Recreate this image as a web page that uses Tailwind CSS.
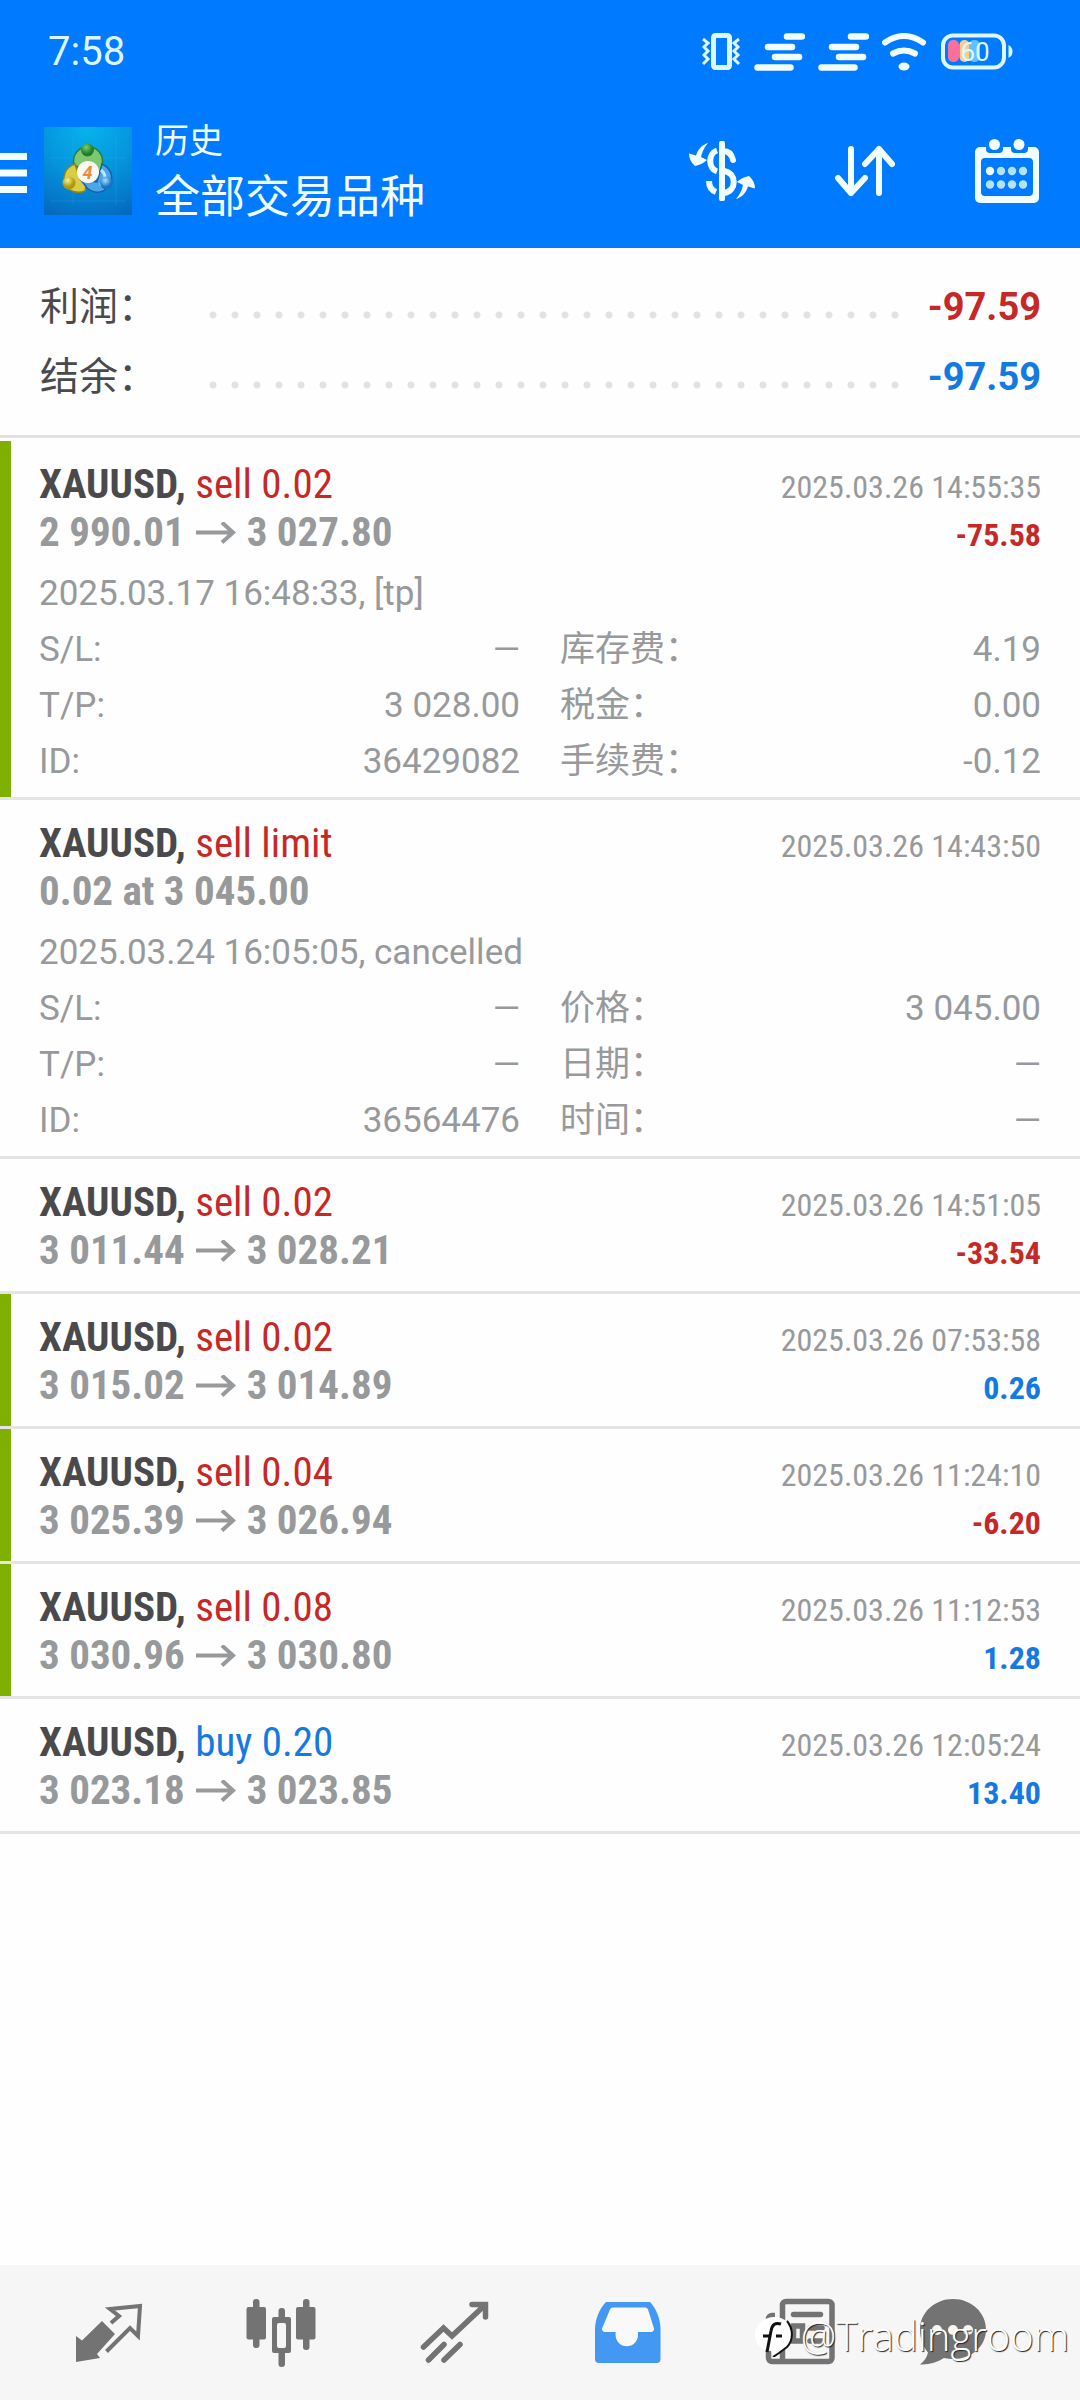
<!DOCTYPE html>
<html lang="zh-CN">
<head>
<meta charset="utf-8">
<meta name="viewport" content="width=device-width, initial-scale=1">
<title>历史</title>
<script src="https://cdn.jsdelivr.net/npm/@tailwindcss/browser@4"></script>
</head>
<body class="relative flex min-h-screen flex-col bg-[#fefefe] font-['Roboto','Noto_Sans_CJK_SC',sans-serif] text-[#97999b]">

<header class="border-b border-[#1f74c8] bg-[#007aff] text-[#f2fdff]">
  <!-- Status bar -->
  <div class="flex h-[104px] items-center justify-between pr-[67px] pl-12">
    <span class="text-[40px] leading-none text-[#dcf7ff]">7:58</span>
    <div class="flex items-center gap-[13px] text-[#dcf7ff]">
      <svg class="h-[38px] w-10" viewBox="0 0 40 38" fill="none" stroke="currentColor" aria-label="振动"><rect x="12.500" y="2.500" width="16" height="32" rx="2" stroke-width="5"/><path d="M2 6l5 4-4 4 4 4-4 4 4 4-5 5M38 6l-5 4 4 4-4 4 4 4-4 4 5 5" stroke-width="3"/></svg>
      <svg class="h-[38px] w-[51px]" viewBox="0 0 51 38" stroke="#f2fdff" stroke-width="6.500" stroke-linecap="round" aria-label="信号"><path d="M33 3.500h15M14 14h24M21 24h24M3.500 34.500h33"/></svg>
      <svg class="h-[38px] w-[51px]" viewBox="0 0 51 38" stroke="#f2fdff" stroke-width="6.500" stroke-linecap="round" aria-label="信号"><path d="M33 3.500h15M14 14h24M21 24h24M3.500 34.500h33"/></svg>
      <svg class="h-[38px] w-[46px]" viewBox="0 0 46 38" fill="none" stroke="#f2fdff" stroke-width="6" stroke-linecap="round" aria-label="无线网络"><path d="M3 9.500Q22-3.500 41 9.500M11 20.500q11-6 22 0"/><ellipse cx="22" cy="33.500" rx="5.500" ry="4" fill="#f2fdff" stroke="none"/></svg>
      <svg class="h-[38px] w-[72px]" viewBox="0 0 72 38" aria-label="电量">
        <rect x="2" y="2.500" width="61" height="32" rx="10" fill="none" stroke="currentColor" stroke-width="4"/>
        <rect x="7" y="7" width="11" height="22" rx="5" fill="#fb6f9d"/><rect x="18.500" y="7" width="10" height="22" rx="5" fill="#f7cf8d"/><rect x="28" y="7" width="11" height="22" rx="5" fill="#62c2ff"/>
        <path d="M67.500 12q4 2 4 6.500t-4 6.500z" fill="currentColor"/>
        <text x="34" y="28" text-anchor="middle" font-size="26" fill="currentColor">60</text>
      </svg>
    </div>
  </div>
  <!-- Title bar -->
  <div class="flex h-[143px] items-center pr-[41px] pb-[9px]">
    <button type="button" aria-label="菜单" class="mt-1"><svg class="h-10 w-[27px]" viewBox="0 0 27 40" fill="#f2fdff"><path d="M0 0h27v7H0zM0 16.500h27v7H0zM0 33h27v7H0z"/></svg></button>
    <svg class="ml-[17px] size-[88px] shrink-0" viewBox="0 0 88 88" aria-hidden="true">
      <defs>
        <radialGradient id="sky" cx=".5" cy="0" r="1.100"><stop offset="0" stop-color="#07b3ec"/><stop offset=".5" stop-color="#0594dc"/><stop offset="1" stop-color="#0468bd"/></radialGradient>
        <radialGradient id="gr" cx=".4" cy=".3"><stop offset="0" stop-color="#7fcf6c"/><stop offset="1" stop-color="#1f7d2e"/></radialGradient>
        <radialGradient id="ye" cx=".4" cy=".3"><stop offset="0" stop-color="#fbf08a"/><stop offset="1" stop-color="#a99a10"/></radialGradient>
        <radialGradient id="bl" cx=".4" cy=".3"><stop offset="0" stop-color="#a5e0ff"/><stop offset="1" stop-color="#1673c4"/></radialGradient>
      </defs>
      <rect width="88" height="88" fill="url(#sky)"/>
      <path d="M29 10v68M72 10v68M6 31h76M6 74h76" stroke="#4bb8ee" stroke-opacity=".2"/>
      <path d="M30 38a14.500 14.500 0 1 1 28 0l-3 12-9-9-8 1z" fill="#7cc770" stroke="#2b7d3a" stroke-width="1.500"/>
      <path d="M31 37c-10 3-12 12-11 19 4 9 14 11 21 8l2-10-8-5z" fill="#d9cd45" stroke="#8b8420" stroke-width="1.500"/>
      <path d="M58 37c8 4 11 11 9 19-5 10-16 12-24 5l-6-8 16 2z" fill="#4ba5e6" stroke="#155fa8" stroke-width="1.500"/>
      <path d="M57 43c6 5 5 12-1 15" fill="none" stroke="#bfe6fb" stroke-width="3"/>
      <circle cx="43.500" cy="23" r="6.500" fill="url(#gr)"/><circle cx="25" cy="56" r="6.500" fill="url(#ye)"/><circle cx="62.500" cy="56" r="6.500" fill="url(#bl)"/>
      <circle cx="44" cy="45" r="11" fill="#fdf9f4"/>
      <text x="43.500" y="51.500" text-anchor="middle" font-size="18" font-weight="700" font-style="italic" fill="#f08a35">4</text>
    </svg>
    <div class="ml-[23px] flex-1">
      <h1 class="text-[34px] leading-[54px]">历史</h1>
      <p class="text-[45px] leading-[60px]">全部交易品种</p>
    </div>
    <div class="flex items-center gap-20">
      <button type="button" aria-label="资金"><svg class="h-[60px] w-[66px]" viewBox="0 0 66 60" fill="none" stroke="currentColor" stroke-width="6"><path d="M33 2.500v55" stroke-linecap="round"/><path d="M28 9.500c-9 3-9 18 0 21M27 51c-5-2-7-6-7-11"/><path d="M34 10c6 0 9 4 10 9M35 30c13 2 13 20 0 22" stroke-linecap="round"/><g fill="currentColor" stroke="none"><path d="M19 2C13 4 9 8 7 14.500L0 12.500c0 5 2 9 6 12.500 5-1 9-3 12-6l-6-3c1-5 3-9 7-14z"/><path d="M47 58c6-2 10-6 12-12.500l7 2c0-5-2-9-6-12.500-5 1-9 3-12 6l6 3c-1 5-3 9-7 14z"/></g></svg></button>
      <button type="button" aria-label="排序"><svg class="h-[52px] w-[60px]" viewBox="0 0 60 52" fill="none" stroke="currentColor" stroke-width="6" stroke-linecap="round" stroke-linejoin="round"><path d="M16 4v44M3 33l13 15 14-15M44 48V4M30 19L44 4l13 15"/></svg></button>
      <button type="button" aria-label="日期"><svg class="size-16" viewBox="0 0 64 64" fill="currentColor"><path fill-rule="evenodd" d="M5 8h54a5 5 0 0 1 5 5v46a5 5 0 0 1-5 5H5a5 5 0 0 1-5-5V13a5 5 0 0 1 5-5zM10 19a4 4 0 0 0-4 4v30a4 4 0 0 0 4 4h44a4 4 0 0 0 4-4V23a4 4 0 0 0-4-4z"/><g fill="#007aff"><path d="M11 7h17v3a4 4 0 0 1-4 4h-9a4 4 0 0 1-4-4zM36 7h17v3a4 4 0 0 1-4 4h-9a4 4 0 0 1-4-4z"/></g><circle cx="19.500" cy="5.500" r="5.500"/><circle cx="44" cy="5.500" r="5.500"/><circle cx="15" cy="32" r="4.200"/><g fill="#b5e2ff"><circle cx="26" cy="32" r="4.200"/><circle cx="37" cy="32" r="4.200"/><circle cx="48" cy="32" r="4.200"/><circle cx="15" cy="45.500" r="4.200"/><circle cx="26" cy="45.500" r="4.200"/><circle cx="37" cy="45.500" r="4.200"/><circle cx="48" cy="45.500" r="4.200"/></g></svg></button>
    </div>
  </div>
</header>

<main class="flex-1">
  <!-- Totals -->
  <dl class="mb-[3px] border-b-3 border-[#e2e2e2] pt-6 pr-[39px] pb-[23px] pl-10 text-[39px] leading-[70px]">
    <div class="flex items-center">
      <dt class="w-[162px] text-[#4a4a4c]">利润：</dt>
      <dd class="mt-4 h-[22px] flex-1 bg-[radial-gradient(circle,#e2e2e2_3px,transparent_4px)] bg-[length:22px_22px]" aria-hidden="true"></dd>
      <dd class="w-[134px] text-right font-bold text-[38px] text-[#c62828]">-97.59</dd>
    </div>
    <div class="flex items-center">
      <dt class="w-[162px] text-[#4a4a4c]">结余：</dt>
      <dd class="mt-4 h-[22px] flex-1 bg-[radial-gradient(circle,#e2e2e2_3px,transparent_4px)] bg-[length:22px_22px]" aria-hidden="true"></dd>
      <dd class="w-[134px] text-right font-bold text-[38px] text-[#1479e0]">-97.59</dd>
    </div>
  </dl>
  <ul id="deals"></ul>
</main>

<nav class="grid h-[135px] grid-cols-[173fr_173fr_173fr_173fr_173fr_133fr] items-center justify-items-center bg-[#f6f6f6] pr-[61px] pl-[21px] text-[#737373]">
  <a href="#quotes" aria-label="行情"><svg class="size-[72px]" viewBox="0 0 72 72"><path d="M4 39l6 4.500L30 24l13 13-18 20 3 4-24 4z" fill="currentColor"/><path d="M39 26l8-7-9-7 30-3-2 30-8-8-23.500 23.500" fill="none" stroke="currentColor" stroke-width="4"/></svg></a>
  <a href="#chart" aria-label="图表"><svg class="size-[72px]" viewBox="0 0 72 72" fill="currentColor"><rect x="8" y="2" width="6.500" height="49" rx="3"/><rect x="1.500" y="10" width="19.500" height="32.500" rx="2"/><rect x="33.500" y="11" width="6.500" height="59" rx="3"/><rect x="27" y="20" width="19" height="36" rx="2"/><rect x="32" y="26" width="9" height="25" rx="2" fill="#f6f6f6"/><rect x="58" y="2" width="6.500" height="51" rx="3"/><rect x="51" y="10" width="19.500" height="32.500" rx="2"/></svg></a>
  <a href="#trade" aria-label="交易"><svg class="size-[72px]" viewBox="0 0 72 72" fill="none" stroke="currentColor" stroke-width="5.500" stroke-linecap="round"><path d="M5.500 50l20-19 8.500 8L67 8M54 7.500h13.500V20M10.500 63L26 47.500M26 63l16-15.500"/></svg></a>
  <a href="#history" aria-label="历史" aria-current="page" class="text-[#4398f3]"><svg class="size-[72px]" viewBox="0 0 72 72"><path d="M15 5h44c6 6 10 16 10.500 26v31a4 4 0 0 1-4 4H8a4 4 0 0 1-4-4V31C4.500 21 9 11 15 5z" fill="currentColor"/><path d="M22 10.500h32a3 3 0 0 1 3 2l6 19a3 3 0 0 1-3 3.500H47v3a11.200 11.200 0 0 1-22.400 0v-3H14a3 3 0 0 1-3-3.500l8-19a3 3 0 0 1 3-2z" fill="#f9f9f9"/></svg></a>
  <a href="#news" aria-label="新闻"><svg class="size-[72px]" viewBox="0 0 72 72" fill="none" stroke="currentColor" stroke-width="5.500"><path d="M18.500 64V8a3.500 3.500 0 0 1 3.500-3.500h42.500A3.500 3.500 0 0 1 68 8v53a3.500 3.500 0 0 1-3.500 3.500H8A3.500 3.500 0 0 1 4.500 61V22a3.500 3.500 0 0 1 3.500-3.500h3"/><path d="M29.500 17.500h27M46 31h12M46 44h12" stroke-linecap="round"/><rect x="29.500" y="29" width="9" height="15"/></svg></a>
  <a href="#messages" aria-label="消息"><svg class="size-[72px]" viewBox="0 0 72 72"><path d="M36 2c18.500 0 33 13.500 33 30.500S54.500 62 36 62c-3 0-6-.4-9-1-7 4.500-15 7-24 6.500 4-3 7-7 8-12-5-6-8-14-8-23C3 15.500 17.500 2 36 2z" fill="currentColor"/><g fill="#f6f6f6"><circle cx="20" cy="33" r="5"/><circle cx="36" cy="33" r="5"/><circle cx="51" cy="33" r="5"/></g></svg></a>
</nav>

<!-- Author mark over the tab bar -->
<div class="pointer-events-none absolute right-[11px] bottom-10 flex items-center gap-[5px] font-['Open_Sans',sans-serif] text-[40px] leading-[48px] font-light text-white">
  <svg class="size-[42px]" viewBox="0 0 42 42"><path d="M20 2c11 0 18 7 18 17s-6 16-12 17l-6 5-3-5C7 35 1 29 1 20S9 2 20 2z" fill="#fff"/><path d="M33 6c6 7 7 19 0 26l-8 6-6 4" fill="none" stroke="#111" stroke-width="2"/><path d="M27 9c-6-2-9 1-10 7l-4 21M9 21h8M22 21h6" fill="none" stroke="#111" stroke-width="3"/></svg>
  <span class="[text-shadow:1px_1px_1px_#222]">@Tradingroom</span>
</div>

<script>
const deals = [
  {side:'sell 0.02', kind:'sell', time:'2025.03.26 14:55:35', from:'2 990.01', to:'3 027.80', profit:'-75.58', tp:true,
   note:'2025.03.17 16:48:33, [tp]', info:[['S/L:','—'],['库存费：','4.19'],['T/P:','3 028.00'],['税金：','0.00'],['ID:','36429082'],['手续费：','-0.12']]},
  {side:'sell limit', kind:'sell', time:'2025.03.26 14:43:50', from:'0.02 at 3 045.00',
   note:'2025.03.24 16:05:05, cancelled', info:[['S/L:','—'],['价格：','3 045.00'],['T/P:','—'],['日期：','—'],['ID:','36564476'],['时间：','—']]},
  {side:'sell 0.02', kind:'sell', time:'2025.03.26 14:51:05', from:'3 011.44', to:'3 028.21', profit:'-33.54'},
  {side:'sell 0.02', kind:'sell', time:'2025.03.26 07:53:58', from:'3 015.02', to:'3 014.89', profit:'0.26', tp:true},
  {side:'sell 0.04', kind:'sell', time:'2025.03.26 11:24:10', from:'3 025.39', to:'3 026.94', profit:'-6.20', tp:true},
  {side:'sell 0.08', kind:'sell', time:'2025.03.26 11:12:53', from:'3 030.96', to:'3 030.80', profit:'1.28', tp:true},
  {side:'buy 0.20', kind:'buy', time:'2025.03.26 12:05:24', from:'3 023.18', to:'3 023.85', profit:'13.40'}
];
const red = 'text-[#c62828]', blue = 'text-[#1479e0]';
const arrow = '<svg class="mx-[11px] inline-block h-6 w-10 align-baseline" viewBox="0 0 40 24" fill="none" stroke="currentColor" stroke-width="4" aria-label="至"><path d="M0 10.500h37M26 .500l11 10-11 10"/></svg>';
document.getElementById('deals').innerHTML = deals.map(d => `
  <li class="flex border-b-3 border-[#e4e4e4]">
    <div class="w-[11px] ${d.tp ? 'bg-[#7fb000]' : ''}"></div>
    <div class="flex-1 pt-[19px] pr-[39px] pl-[28px] ${d.info ? 'pb-[7px]' : 'pb-[17px]'}">
      <div class="flex h-12 items-baseline justify-between font-['Roboto_Condensed',sans-serif] leading-[48px]">
        <h2 class="text-[41px]"><b class="text-[#4a4a4c]">XAUUSD,</b> <span class="${d.kind === 'buy' ? blue : red}">${d.side}</span></h2>
        <time class="text-[32px]">${d.time}</time>
      </div>
      <div class="flex h-12 items-baseline justify-between font-['Roboto_Condensed',sans-serif] leading-[48px] font-bold">
        <p class="text-[41px]">${d.from}${d.to ? arrow + d.to : ''}</p>
        ${d.profit ? `<p class="text-[32px] ${d.profit[0] === '-' ? red : blue}">${d.profit}</p>` : ''}
      </div>
      ${d.info ? `<p class="mt-[10px] text-[35px] leading-[56px]">${d.note}</p>
      <dl class="grid grid-cols-2 gap-x-10 text-[35px] leading-[56px]">${d.info.map(([k, v]) => `<div class="flex justify-between"><dt>${k}</dt><dd>${v}</dd></div>`).join('')}</dl>` : ''}
    </div>
  </li>`).join('');
</script>
</body>
</html>
